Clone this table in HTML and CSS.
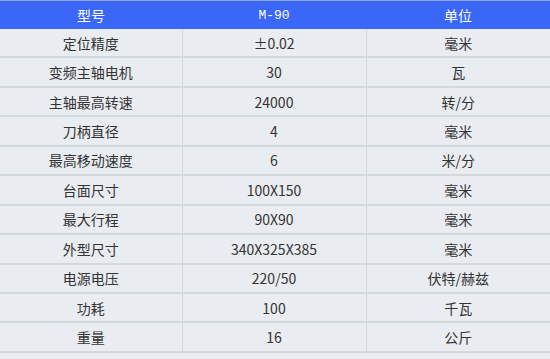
FILE: index.html
```html
<!DOCTYPE html>
<html lang="zh">
<head>
<meta charset="utf-8">
<link rel="stylesheet" href="styles.css">
</head>
<body>
<table class="spec">
  <thead>
    <tr><th>型号</th><th class="model">M-90</th><th>单位</th></tr>
  </thead>
  <tbody>
    <tr><td>定位精度</td><td>±0.02</td><td>毫米</td></tr>
    <tr><td>变频主轴电机</td><td>30</td><td>瓦</td></tr>
    <tr><td>主轴最高转速</td><td>24000</td><td>转/分</td></tr>
    <tr><td>刀柄直径</td><td>4</td><td>毫米</td></tr>
    <tr><td>最高移动速度</td><td>6</td><td>米/分</td></tr>
    <tr><td>台面尺寸</td><td>100X150</td><td>毫米</td></tr>
    <tr><td>最大行程</td><td>90X90</td><td>毫米</td></tr>
    <tr><td>外型尺寸</td><td>340X325X385</td><td>毫米</td></tr>
    <tr><td>电源电压</td><td>220/50</td><td>伏特/赫兹</td></tr>
    <tr><td>功耗</td><td>100</td><td>千瓦</td></tr>
    <tr><td>重量</td><td>16</td><td>公斤</td></tr>
  </tbody>
</table>
</body>
</html>
```
FILE: styles.css
```css
html, body {
  margin: 0;
  padding: 0;
  background: #e9ecf0;
}
.spec {
  width: 550px;
  border-collapse: collapse;
  table-layout: fixed;
  font-family: "Noto Sans CJK SC", "Noto Sans", sans-serif;
  font-size: 14px;
  color: #333;
  background: #e9ecf0;
}
.spec th {
  height: 28px;
  padding: 0;
  background: #3a67f7;
  color: #fff;
  font-weight: normal;
  border-top: 1px solid #8fa6d8;
  text-align: center;
}
.spec th.model {
  font-family: "Liberation Mono", monospace;
  font-size: 13px;
}
.spec td {
  height: 27.44px;
  padding: 0;
  text-align: center;
  border-bottom: 2px solid #d3d8df;
  border-left: 1px solid #d5d9df;
  border-right: 1px solid #d5d9df;
}
.spec td:first-child { border-left: none; }
.spec td:last-child { border-right: none; }
.spec th:first-child, .spec td:first-child { width: 182px; }
.spec th:nth-child(2), .spec td:nth-child(2) { width: 184px; }
```
